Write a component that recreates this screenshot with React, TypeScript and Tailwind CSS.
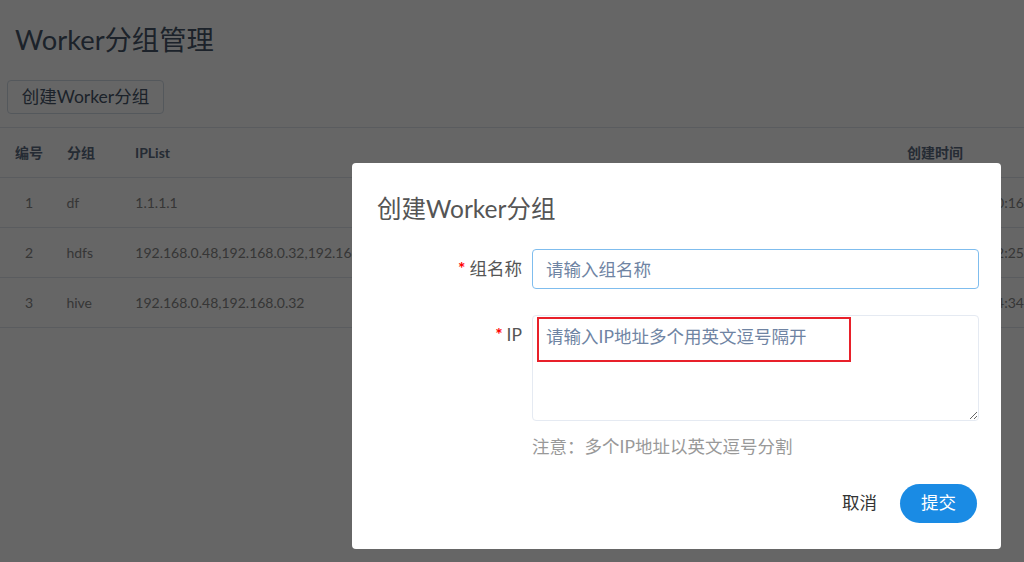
import React from "react";

const rows = [
  { id: 1, group: "df", ips: "1.1.1.1", time: "2022-03-29 14:20:16" },
  { id: 2, group: "hdfs", ips: "192.168.0.48,192.168.0.32,192.168.0.40", time: "2022-03-29 14:22:25" },
  { id: 3, group: "hive", ips: "192.168.0.48,192.168.0.32", time: "2022-03-29 14:24:34" },
];

export default function App() {
  return (
    <div
      className="relative w-[1024px] h-[562px] overflow-hidden bg-white"
      style={{ fontFamily: 'Lato, "Noto Sans CJK SC", sans-serif' }}
    >
      {/* page */}
      <div className="flex flex-col">
        <div className="h-[80px] pl-[15px] pt-[20px] text-[27.3px] leading-[40px] text-[#475669]">
          Worker分组管理
        </div>
        <div className="pl-[7px] pb-[13px]">
          <button className="h-[34px] w-[157px] rounded-[4px] border border-[#d3dce6] text-[17.5px] text-[#475669]">
            创建Worker分组
          </button>
        </div>
        <div className="border-t border-[#e0e6ed]">
          <div className="flex h-[50px] items-center border-b border-[#e0e6ed] text-[14px] font-bold text-[#5e6d82]">
            <div className="w-[52px] pl-[15px]">编号</div>
            <div className="w-[68px] pl-[15px]">分组</div>
            <div className="w-[772px] pl-[15px]">IPList</div>
            <div className="pl-[15px]">创建时间</div>
          </div>
          {rows.map((r) => (
            <div
              key={r.id}
              className="flex h-[50px] items-center border-b border-[#e0e6ed] text-[14px] text-[#888] whitespace-nowrap"
            >
              <div className="w-[52px] pl-[25px]">{r.id}</div>
              <div className="w-[68px] pl-[15px]">{r.group}</div>
              <div className="w-[772px] pl-[17px]">{r.ips}</div>
              <div className="pl-[15px]">{r.time}</div>
            </div>
          ))}
        </div>
      </div>

      {/* overlay */}
      <div className="absolute inset-0 bg-black/60" />

      {/* dialog */}
      <div className="absolute left-[352px] top-[163px] w-[649px] h-[386px] rounded-[4px] bg-white flex flex-col pl-[25px] pr-[22px]">
        <div className="pt-[30px] text-[24.5px] leading-[32px] text-[#555]">创建Worker分组</div>
        <div className="mt-[24px] flex items-center">
          <div className="w-[145px] text-right text-[17.5px] text-[#555]">
            <span className="mr-[4px] font-bold text-[#ff0000]">*</span>组名称
          </div>
          <input
            className="ml-[10px] h-[40px] w-[447px] rounded-[4px] border border-[#7fbdee] px-[13px] text-[17.5px] outline-none placeholder:text-[#6f84a3]"
            placeholder="请输入组名称"
          />
        </div>
        <div className="mt-[26px] flex items-start">
          <div className="w-[145px] pt-[8px] text-right text-[17.5px] leading-[24px] text-[#555]">
            <span className="mr-[4px] font-bold text-[#ff0000]">*</span>IP
          </div>
          <div className="relative ml-[10px]">
            <textarea
              className="block h-[106px] w-[447px] rounded-[4px] border border-[#e5eaf2] px-[13px] py-[9px] text-[17.5px] leading-[24px] outline-none placeholder:text-[#6f84a3]"
              placeholder="请输入IP地址多个用英文逗号隔开"
            />
            <div className="pointer-events-none absolute left-[5px] top-[2px] h-[45px] w-[314px] border-2 border-[#e8202a]" />
          </div>
        </div>
        <div className="ml-[155px] mt-[14px] text-[17.5px] leading-[24px] text-[#999]">
          注意：多个IP地址以英文逗号分割
        </div>
        <div className="mt-[25px] flex items-center justify-end gap-[23px] pr-[2px]">
          <span className="text-[17.5px] text-[#333]">取消</span>
          <button className="h-[39px] w-[77px] rounded-full bg-[#1a8be4] text-[17.5px] text-white">提交</button>
        </div>
      </div>
    </div>
  );
}
